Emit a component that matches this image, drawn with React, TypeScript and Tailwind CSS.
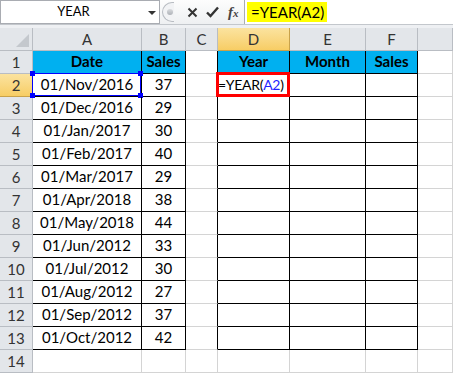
import React from 'react';

const rows: [string, string][] = [
  ['01/Nov/2016', '37'],
  ['01/Dec/2016', '29'],
  ['01/Jan/2017', '30'],
  ['01/Feb/2017', '40'],
  ['01/Mar/2017', '29'],
  ['01/Apr/2018', '38'],
  ['01/May/2018', '44'],
  ['01/Jun/2012', '33'],
  ['01/Jul/2012', '30'],
  ['01/Aug/2012', '27'],
  ['01/Sep/2012', '37'],
  ['01/Oct/2012', '42'],
];

const cols = ['A', 'B', 'C', 'D', 'E', 'F', ''];

const hdr = 'flex items-center justify-center border-r border-b border-[#b9bdc3] bg-[#e3e6ea] text-[#333]';
const hot = 'flex items-center justify-center border-r border-b border-[#c9a24a] bg-gradient-to-b from-[#fbe39f] to-[#f7cd64] text-[#333]';
const grid = 'border-r border-b border-[#d4d4d4]';
const boxed = 'border-r border-b border-black';

const Corner = ({ className }: { className: string }) => (
  <div className={'absolute w-[5px] h-[5px] bg-[#0000ff] ' + className} />
);

const FormulaBar = () => (
  <div className="flex h-[25px] border-b border-[#c3c7cc] bg-white">
    {/* name box */}
    <div className="relative flex items-center w-[160px] h-[24px] border border-[#a9acb2] bg-white">
      <div className="w-[145px] text-center text-[13px] text-black">YEAR</div>
      <div className="absolute left-[147px] top-[10px] w-0 h-0 border-l-[4px] border-r-[4px] border-t-[4px] border-l-transparent border-r-transparent border-t-[#333]" />
    </div>
    {/* buttons */}
    <div className="flex items-center w-[85px] h-[24px] bg-gradient-to-b from-[#fdfdfd] to-[#eef0f2] border-r border-[#a9acb2]">
      <div className="ml-[2px] w-[12px] h-[20px] rounded-l-full border border-r-0 border-[#b8bcc2] bg-[#f2f3f5] flex items-center justify-center">
        <div className="ml-[3px] w-[6px] h-[6px] rounded-full bg-gradient-to-b from-[#d9dbde] to-[#aeb2b8]" />
      </div>
      <svg className="ml-[13px]" width="11" height="11" viewBox="0 0 11 11">
        <path d="M1.5 1.5 L9.5 9.5 M9.5 1.5 L1.5 9.5" stroke="#333" strokeWidth="2" />
      </svg>
      <svg className="ml-[8px]" width="13" height="12" viewBox="0 0 13 12">
        <path d="M1 6.5 L4.5 10 L12 1.5" stroke="#333" strokeWidth="2.4" fill="none" />
      </svg>
      <span className="ml-[9px] text-[15px] italic font-bold text-[#444]" style={{ fontFamily: '"Liberation Serif", serif' }}>
        f<span className="text-[11px]">x</span>
      </span>
    </div>
    {/* formula input */}
    <div className="flex-1 flex items-center pl-[2px]">
      <div className="h-[20px] w-[80px] bg-[#ffff00] flex items-center pl-[4px] text-[15px] text-black">=YEAR(A2)</div>
    </div>
  </div>
);

export default function App() {
  return (
    <div className="w-[453px] h-[374px] overflow-hidden bg-white" style={{ fontFamily: 'Lato, "Liberation Sans", sans-serif' }}>
      <FormulaBar />
      <div className="h-[3px] bg-[#eef0f3]" />
      <div className="grid grid-cols-[33px_109px_44px_32px_72px_76px_52px_1fr] auto-rows-[23px] text-[15px]">
        {/* column headers */}
        <div className={'relative ' + hdr}>
          <svg className="absolute right-[3px] bottom-[3px]" width="13" height="13" viewBox="0 0 13 13">
            <path d="M13 0 L13 13 L0 13 Z" fill="#c4c8cd" />
          </svg>
        </div>
        {cols.map((c) => (
          <div key={c || 'g'} className={c === 'D' ? hot : hdr}>{c}</div>
        ))}

        {/* row 1 */}
        <div className={hdr}>1</div>
        <div className={boxed + ' bg-[#00b0f0] flex items-end justify-center font-bold pb-[1px]'}>Date</div>
        <div className={boxed + ' bg-[#00b0f0] flex items-end justify-center font-bold pb-[1px]'}>Sales</div>
        <div className="border-r border-b border-r-black border-b-[#d4d4d4]" />
        <div className={boxed + ' bg-[#00b0f0] flex items-end justify-center font-bold pb-[1px]'}>Year</div>
        <div className={boxed + ' bg-[#00b0f0] flex items-end justify-center font-bold pb-[1px]'}>Month</div>
        <div className={boxed + ' bg-[#00b0f0] flex items-end justify-center font-bold pb-[1px]'}>Sales</div>
        <div className={grid} />

        {rows.map(([d, s], i) => (
          <React.Fragment key={d}>
            <div className={i === 0 ? hot : hdr}>{i + 2}</div>
            <div className={boxed + ' relative flex items-end justify-center pb-[1px] text-black'}>
              {d}
              {i === 0 && (
                <div className="absolute -left-[1px] -top-[1px] right-0 bottom-0 border border-[#0000ff]">
                  <Corner className="-left-[3px] -top-[3px]" />
                  <Corner className="-right-[3px] -top-[3px]" />
                  <Corner className="-left-[3px] -bottom-[3px]" />
                  <Corner className="-right-[3px] -bottom-[3px]" />
                </div>
              )}
            </div>
            <div className={boxed + ' flex items-end justify-center pb-[1px] text-black'}>{s}</div>
            <div className="border-r border-b border-r-black border-b-[#d4d4d4]" />
            <div className={boxed + ' relative flex items-end pb-[1px] text-black whitespace-nowrap'}>
              {i === 0 && (
                <>
                  <span className="text-[14px] tracking-[-0.3px]">=YEAR(<span className="text-[#1f1fff]">A2</span>)</span>
                  <div className="absolute -left-[2px] -top-[2px] -right-[1px] -bottom-[1px] border-[3px] border-[#ff0000]" />
                </>
              )}
            </div>
            <div className={boxed} />
            <div className={boxed} />
            <div className={grid} />
          </React.Fragment>
        ))}

        {/* row 14 */}
        <div className={hdr}>14</div>
        {cols.map((c) => (
          <div key={'r14' + c} className={grid} />
        ))}
      </div>
    </div>
  );
}
